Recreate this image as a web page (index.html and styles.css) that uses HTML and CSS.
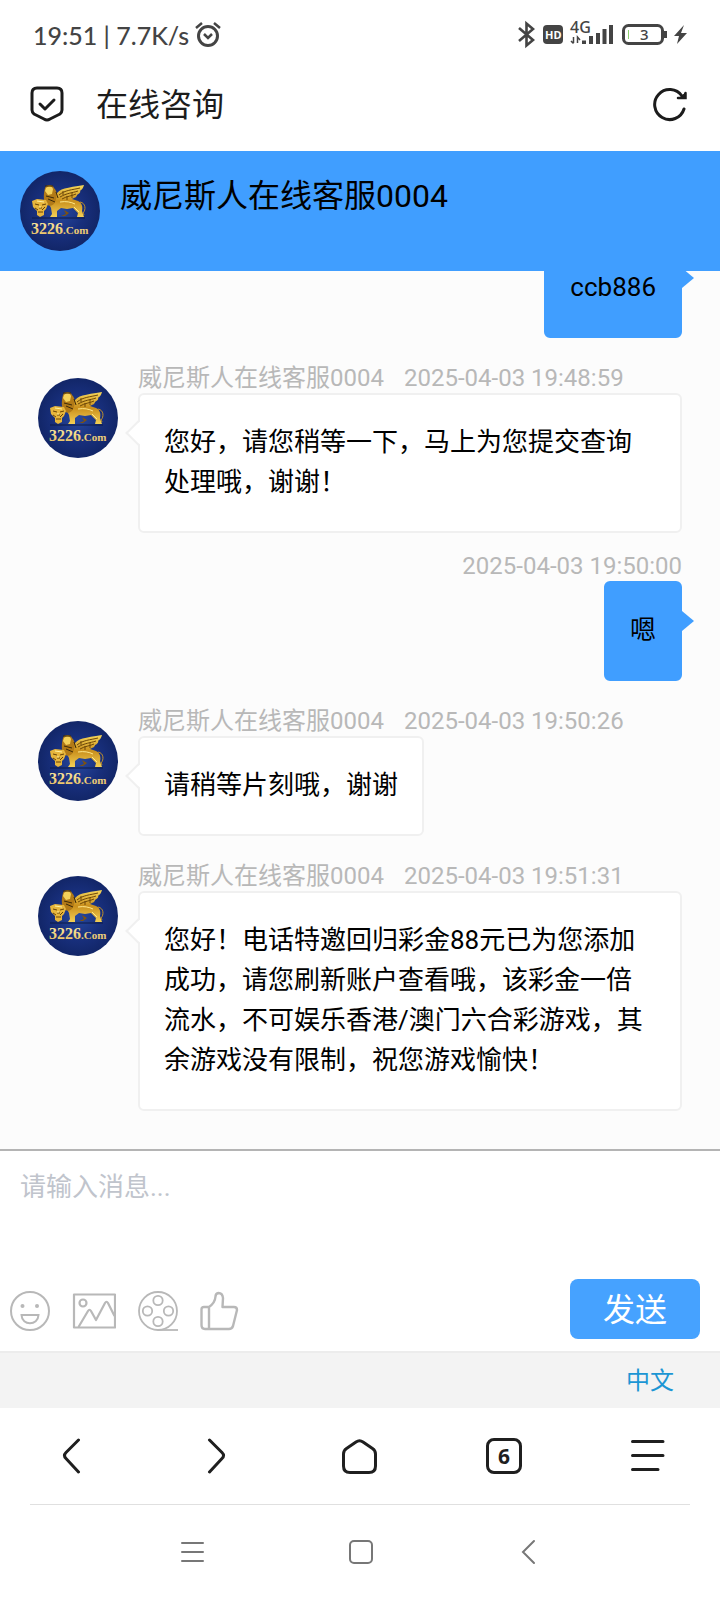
FILE: index.html
```html
<!DOCTYPE html>
<html lang="zh-CN">
<head>
<meta charset="utf-8">
<meta name="viewport" content="width=device-width, initial-scale=1">
<title>在线咨询</title>
<link rel="stylesheet" href="styles.css">
</head>
<body>
<svg class="sprite" aria-hidden="true">
  <defs>
    <radialGradient id="navy" cx="50%" cy="50%" r="50%">
      <stop offset="0" stop-color="#26489f"/>
      <stop offset="0.6" stop-color="#182f7c"/>
      <stop offset="1" stop-color="#122668"/>
    </radialGradient>
    <linearGradient id="gold" x1="0" y1="0" x2="0" y2="1">
      <stop offset="0" stop-color="#f6d75a"/>
      <stop offset="0.5" stop-color="#c98f1c"/>
      <stop offset="1" stop-color="#f3cf55"/>
    </linearGradient>
    <linearGradient id="cream" x1="0" y1="0" x2="0" y2="1">
      <stop offset="0" stop-color="#fdf0a8"/>
      <stop offset="1" stop-color="#e8bd5c"/>
    </linearGradient>
    <symbol id="crest" viewBox="0 0 80 80">
      <circle cx="40" cy="40" r="40" fill="url(#navy)"/>
      <path d="M12 47H65" stroke="#0c1a48" stroke-width="1"/>
      <path d="M36 24C39 17 47 17 64 14C63 18 61 19 60 20C61 21 59 23 57 24C57 26 54 27 52 28L58 30C62 32 63 36 62 40L64 46H57L58 42L53 37L47 38L41 37L37 40L37 46H30L32 43L31 37L28 31L33 28Z" fill="url(#gold)"/>
      <path d="M25 17C26 13 33 13 34 17C38 21 37 27 35 31C33 36 27 36 25 31C23 27 24 21 25 17Z" fill="#b27a17"/>
      <path d="M26 17C29 14 32 15 33 18L32 23L28 24L25 20Z" fill="#f4d15a"/>
      <path d="M25 15H33M26 25L34 27M28 28L35 31M36 21L38 27" stroke="#3d2a08" stroke-width="1" fill="none"/>
      <path d="M39 24C45 19 52 19 60 17M40 26C47 22 52 22 58 20M42 28C47 25 52 25 56 23M47 29V25M52 27V21M43 24V20" stroke="#6d4708" stroke-width="1" fill="none"/>
      <path d="M40 31C46 30 51 31 55 33M54 36L59 41" stroke="#ffe88a" stroke-width="1" fill="none"/>
      <path d="M60 31C66 32 66 39 63 42L64 44" stroke="#c29028" stroke-width="1" fill="none"/>
      <path d="M12 30L17 28L26 29L28 33L26 38L24 40V44L20 46L17 44V40L13 36Z" fill="#e6b53c"/>
      <path d="M15 33L19 34M22 34L26 33M19 37H22M18 41H23M15 37L18 39M25 36L22 39" stroke="#684307" stroke-width="1" fill="none"/>
      <path d="M17 30L24 31M20 35V37" stroke="#fff0a0" stroke-width="1"/>
      <path d="M44 39L49 42L45 45H41L46 43Z" fill="#80530d"/>
      <text x="11" y="63" font-family="Liberation Serif" font-weight="700" font-size="16" fill="url(#cream)">3226<tspan font-size="11">.Com</tspan></text>
    </symbol>
  </defs>
</svg>
<div class="app">
  <div class="status">
    <span class="status-text">19:51 | 7.7K/s</span>
    <svg class="alarm" width="26" height="26" viewBox="0 0 26 26" fill="none" stroke="#444" stroke-width="3">
      <circle cx="13" cy="14" r="9.5"/><path d="M9 12L13 16L17 12M1 6L7 1M25 6L19 1" stroke-width="2.5"/>
    </svg>
    <svg class="status-icons" width="172" height="28" viewBox="0 0 172 28" fill="none" stroke="#444">
      <path d="M1 7L15 19L8.500 24.500V2.500L15 8L1 20" stroke-width="2.600"/>
      <rect x="25" y="4" width="20" height="19" rx="4" fill="#444" stroke="none"/>
      <text x="27" y="18" class="hd">HD</text>
      <text x="52" y="12" class="network">4G</text>
      <path d="M55.500 16V22M53 20L55.500 22.500M59.500 22V16L62 19" stroke-width="1.500"/>
      <path d="M66 23V19.500M73 23V15M80 23V12M86.500 23V8M93 23V4" stroke-width="4"/>
      <rect x="105.500" y="4.500" width="39" height="18" rx="5" stroke-width="3"/>
      <path d="M110.500 9V18" stroke="#8ed070" stroke-width="1"/>
      <text x="122" y="19" class="charge">3</text>
      <path d="M147.500 10V17" stroke-width="3"/>
      <path d="M166 4L156 15H161L159 23L169 12H163Z" fill="#444" stroke="none"/>
    </svg>
  </div>
  <header class="titlebar">
    <svg width="34" height="36" viewBox="0 0 34 36" fill="none" stroke="#1c1c1c" stroke-width="3" stroke-linecap="round" stroke-linejoin="round">
      <path d="M7 2H27Q32 2 32 7V24Q32 26 30 28L20 33Q17 35 14 33L4 28Q2 26 2 24V7Q2 2 7 2Z"/><path d="M10 18L15 23L24 14"/>
    </svg>
    <h1 class="page-title">在线咨询</h1>
    <button class="plain" aria-label="刷新">
      <svg width="36" height="36" viewBox="0 0 36 36" fill="none" stroke="#1c1c1c" stroke-width="3" stroke-linecap="round">
        <path d="M32 23A15 15 0 1 1 30 10"/><path d="M33.500 7V12H26" stroke-width="2.500"/><path d="M33.500 7V12H28Z" fill="#1c1c1c" stroke-width="1"/>
      </svg>
    </button>
  </header>
  <section class="agent">
    <svg class="avatar" role="img" aria-label="客服头像"><use href="#crest"/></svg>
    <h2 class="agent-name">威尼斯人在线客服0004</h2>
  </section>
  <main class="chat">
    <article class="row sent"><p class="bubble">ccb886</p></article>
    <article class="row">
      <svg class="avatar"><use href="#crest"/></svg>
      <div class="message">
        <div class="meta"><span>威尼斯人在线客服0004</span><time>2025-04-03 19:48:59</time></div>
        <p class="bubble">您好，请您稍等一下，马上为您提交查询处理哦，谢谢！</p>
      </div>
    </article>
    <article class="row sent">
      <div class="meta"><time>2025-04-03 19:50:00</time></div>
      <p class="bubble">嗯</p>
    </article>
    <article class="row">
      <svg class="avatar"><use href="#crest"/></svg>
      <div class="message">
        <div class="meta"><span>威尼斯人在线客服0004</span><time>2025-04-03 19:50:26</time></div>
        <p class="bubble">请稍等片刻哦，谢谢</p>
      </div>
    </article>
    <article class="row">
      <svg class="avatar"><use href="#crest"/></svg>
      <div class="message">
        <div class="meta"><span>威尼斯人在线客服0004</span><time>2025-04-03 19:51:31</time></div>
        <p class="bubble">您好！电话特邀回归彩金88元已为您添加成功，请您刷新账户查看哦，该彩金一倍流水，不可娱乐香港/澳门六合彩游戏，其余游戏没有限制，祝您游戏愉快！</p>
      </div>
    </article>
  </main>
  <form class="composer">
    <textarea class="input" aria-label="消息" placeholder="请输入消息..."></textarea>
    <div class="tools">
      <button type="button" class="plain" aria-label="表情">
        <svg width="40" height="40" viewBox="0 0 40 40" fill="none" stroke="#b8b8b8" stroke-width="2">
          <circle cx="20" cy="20" r="19"/><circle cx="12.500" cy="15" r="2" fill="#b8b8b8" stroke="none"/><circle cx="27" cy="15" r="2" fill="#b8b8b8" stroke="none"/><path d="M11.500 24H28.500C28 35 12 35 11.500 24Z"/>
        </svg>
      </button>
      <button type="button" class="plain" aria-label="图片">
        <svg width="44" height="40" viewBox="0 0 44 40" fill="none" stroke="#b8b8b8" stroke-width="2.200" stroke-linejoin="round">
          <rect x="2" y="3.500" width="41" height="33"/><circle cx="11" cy="12" r="3.500"/><path d="M6.500 36L16 20Q17.500 17.500 19 20L24 29L33 12Q34.500 9.500 36 12L42.500 25"/>
        </svg>
      </button>
      <button type="button" class="plain" aria-label="视频">
        <svg width="40" height="40" viewBox="0 0 40 40" fill="none" stroke="#b8b8b8" stroke-width="1.800">
          <circle cx="20" cy="20" r="19"/><circle cx="20" cy="9.500" r="4.700"/><circle cx="9.500" cy="20" r="4.700"/><circle cx="30.500" cy="20" r="4.700"/><circle cx="20" cy="30.500" r="4.700"/><path d="M20 39H40"/>
        </svg>
      </button>
      <button type="button" class="plain" aria-label="点赞">
        <svg width="40" height="40" viewBox="0 0 40 40" fill="none" stroke="#b8b8b8" stroke-width="2.400" stroke-linejoin="round">
          <path d="M9 16H4Q1.500 16 1.500 18.500V34Q1.500 38 5 38H29Q32 38 33 35L37 19Q37 16 34 16H22.500L23 7Q22.500 2 18.500 2Q15.500 2.500 15.500 5.500Q15 12 9 16ZM9 16V38"/>
        </svg>
      </button>
      <button type="submit" class="send">发送</button>
    </div>
  </form>
  <div class="language"><a class="lang-link" href="#">中文</a></div>
  <nav class="browser-nav" aria-label="浏览器">
    <button class="plain" aria-label="后退"><svg width="36" height="36" viewBox="0 0 36 36"><path d="M24.500 2L12 14.500Q9 17.500 12 20.500L24.500 34"/></svg></button>
    <button class="plain" aria-label="前进"><svg width="36" height="36" viewBox="0 0 36 36"><path d="M11.500 2L24 14.500Q27 17.500 24 20.500L11.500 34"/></svg></button>
    <button class="plain" aria-label="主页"><svg width="36" height="36" viewBox="0 0 36 36"><path d="M14 4Q17.500 1.500 21 4L30.500 10.500Q33.500 12.500 33.500 16V28Q33.500 34.500 27 34.500H8Q1.500 34.500 1.500 28V16Q1.500 12.500 4.500 10.500Z"/></svg></button>
    <button class="tabs" aria-label="标签页">6</button>
    <button class="plain" aria-label="菜单"><svg width="36" height="36" viewBox="0 0 36 36"><path d="M2.500 3.500H33M2.500 17.500H33M2.500 31.500H28"/></svg></button>
  </nav>
  <nav class="system-nav" aria-label="系统">
    <button class="plain" aria-label="最近任务"><svg width="26" height="26" viewBox="0 0 26 26"><path d="M2 4H23M2 13H23M2 22H23"/></svg></button>
    <button class="plain" aria-label="桌面"><svg width="26" height="26" viewBox="0 0 26 26"><rect x="3" y="2" width="22" height="22" rx="4"/></svg></button>
    <button class="plain" aria-label="返回"><svg width="26" height="26" viewBox="0 0 26 26"><path d="M20 2L9 13L20 24"/></svg></button>
  </nav>
</div>
</body>
</html>
```

FILE: styles.css
```css
* { box-sizing: border-box; }

body {
  margin: 0;
  background: #fff;
  color: #000;
  font-family: Roboto, "Noto Sans CJK SC", sans-serif;
}

h1, h2, p { margin: 0; font-weight: 400; }
svg { display: block; flex: none; }
button { font-family: inherit; cursor: pointer; }

.sprite { position: absolute; width: 0; height: 0; }

.app {
  display: flex;
  flex-direction: column;
  height: 100vh;
}

.plain {
  display: block;
  padding: 0;
  border: 0;
  background: none;
}

/* Phone status line */
.status {
  display: flex;
  align-items: center;
  height: 56px;
  padding: 14px 30px 0 33px;
  color: #444;
}
.status-text {
  font: 500 25px/32px Lato, sans-serif;
}
.alarm { margin-left: 6px; }
.status-icons { margin-left: auto; overflow: visible; }
.status-icons text { fill: #444; stroke: none; font-family: "Noto Sans", sans-serif; }
.status-icons .hd { fill: #fff; font-size: 11px; font-weight: 700; }
.status-icons .network { font-size: 16px; font-weight: 500; }
.status-icons .charge { font-size: 15px; font-weight: 500; }

.titlebar {
  display: flex;
  align-items: center;
  height: 95px;
  padding: 0 32px 0 30px;
}
.page-title {
  flex: 1;
  margin-left: 32px;
  padding-top: 2px;
  font-size: 32px;
  line-height: 40px;
  color: #1c1c1c;
}

.agent {
  display: flex;
  gap: 20px;
  padding: 20px;
  background: #409eff;
}
.agent-name { font-size: 32px; line-height: 50px; }
.avatar { width: 80px; height: 80px; }

/* Conversation, kept scrolled to the newest message */
.chat {
  display: flex;
  flex: 1 1 0;
  flex-direction: column;
  justify-content: flex-end;
  min-height: 0;
  padding: 0 38px 38px;
  overflow: hidden;
  background: #fcfcfc;
}
.row {
  display: flex;
  flex: none;
  gap: 20px;
  margin-top: 23px;
}
.row .avatar { margin-top: 17px; }
.message {
  display: flex;
  flex: 1;
  flex-direction: column;
  align-items: flex-start;
  min-width: 0;
}
.sent {
  flex-direction: column;
  align-items: flex-end;
  gap: 0;
  margin-top: 16px;
}
.meta {
  display: flex;
  gap: 20px;
  padding-top: 2px;
  font-size: 24px;
  line-height: 30px;
  color: #b8b8b8;
}
.bubble {
  position: relative;
  padding: 27px 24px 29px;
  border: 2px solid #f0f0f0;
  border-radius: 6px;
  background: #fff;
  font-size: 26px;
  line-height: 40px;
}
.bubble::before {
  content: "";
  position: absolute;
  top: 29px;
  left: -11px;
  width: 16px;
  height: 16px;
  border: solid #f0f0f0;
  border-width: 0 0 2px 2px;
  background: linear-gradient(45deg, #fff 62%, transparent 62%);
  transform: rotate(45deg);
}
.sent .bubble {
  border-color: #409eff;
  background: #409eff;
}
.sent .bubble::before {
  top: 28px;
  right: -14px;
  left: auto;
  width: 12px;
  height: 20px;
  border: 0;
  background: #409eff;
  clip-path: polygon(0 0, 100% 50%, 0 100%);
  transform: none;
}

.composer {
  display: flex;
  flex-direction: column;
  border-top: 2px solid #b4b4b4;
  background: #fff;
}
.input {
  width: 100%;
  height: 128px;
  padding: 16px 20px;
  border: 0;
  outline: 0;
  resize: none;
  background: none;
  font-family: inherit;
  font-size: 26px;
  line-height: 40px;
}
.input::placeholder { color: #c0c4cc; }
.tools {
  display: flex;
  align-items: center;
  gap: 22px;
  padding: 0 20px 12px 10px;
}
.tools .plain { padding-top: 4px; }
.send {
  width: 130px;
  height: 60px;
  margin-left: auto;
  padding: 2px 0 0;
  border: 0;
  border-radius: 8px;
  background: #46a2ff;
  color: #fff;
  font-size: 32px;
  line-height: 40px;
}

.language {
  display: flex;
  justify-content: flex-end;
  padding: 12px 46px 11px;
  border-top: 2px solid #ececec;
  background: #f3f3f3;
}
.lang-link {
  color: #1c96d4;
  font-size: 24px;
  line-height: 32px;
  text-decoration: none;
}

.browser-nav {
  display: grid;
  grid-template-columns: repeat(5, 1fr);
  align-items: center;
  justify-items: center;
  height: 96px;
}
.browser-nav svg {
  fill: none;
  stroke: #1f1f1f;
  stroke-width: 3;
  stroke-linecap: round;
  stroke-linejoin: round;
}
.tabs {
  width: 36px;
  height: 36px;
  padding: 0;
  border: 3px solid #1f1f1f;
  border-radius: 8px;
  background: none;
  color: #1f1f1f;
  font: 700 21px/28px "Noto Sans", sans-serif;
}

.system-nav {
  display: grid;
  grid-template-columns: repeat(3, 1fr);
  align-items: center;
  justify-items: center;
  height: 96px;
  margin: 0 30px;
  padding: 0 80px 2px;
  border-top: 1px solid #e0e0e0;
}
.system-nav svg {
  fill: none;
  stroke: #777;
  stroke-width: 2;
  stroke-linecap: round;
}
```
